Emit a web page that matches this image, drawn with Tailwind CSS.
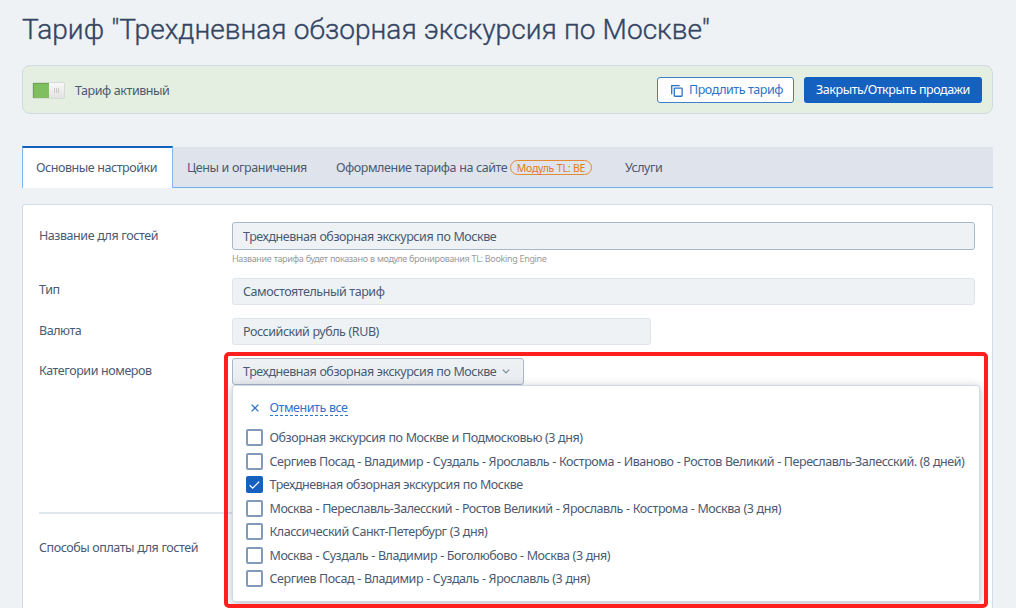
<!DOCTYPE html>
<html lang="ru">
<head>
<meta charset="utf-8">
<title>Тариф</title>
<script src="https://cdn.jsdelivr.net/npm/@tailwindcss/browser@4"></script>
</head>
<body class="h-[608px] w-[1016px] overflow-hidden bg-[#eef2f5] font-['Noto_Sans',sans-serif] text-[12.5px] leading-[18px] tracking-[-0.45px] whitespace-nowrap text-[#4b5a72] [word-spacing:0.3px]">
<div class="relative flex h-[608px] flex-col pr-[23px] pl-[22px]">
  <h1 class="mt-[10px] h-10 font-['Roboto',sans-serif] text-[28.1px] leading-10 font-light tracking-normal text-[#344563] [-webkit-text-stroke:0.35px_#344563]">Тариф "Трехдневная обзорная экскурсия по Москве"</h1>

  <section class="mt-[15px] flex h-[49px] shrink-0 items-center rounded-lg border border-[#d0dbe0] bg-[#e4eee1] pr-[10px] pl-[9px]">
    <div class="mt-px flex h-[17px] w-[33px] overflow-hidden rounded-[2px] border border-[#d4dcd3]">
      <div class="w-4 bg-[#7fbf60] shadow-[inset_1px_1px_1px_#69a54d]"></div>
      <div class="flex flex-1 items-center justify-center gap-px bg-linear-to-b from-[#f9f9f9] to-[#e2e2e2]">
        <i class="h-[5px] w-px bg-[#c8c8c8]"></i><i class="h-[5px] w-px bg-[#c8c8c8]"></i><i class="h-[5px] w-px bg-[#c8c8c8]"></i>
      </div>
    </div>
    <span class="mt-[2px] ml-[10px]">Тариф активный</span>
    <button class="ml-auto flex h-[26px] w-[137px] items-center rounded-[3px] border border-[#3f80cb] bg-white pl-[13px] text-[#2f73c5]">
      <svg class="mt-[3px] mr-[7px] size-[12px]" viewBox="0 0 11 11" fill="none" stroke="currentColor" stroke-width="1.2"><path d="M.65 8.5V.65H8"/><rect x="3" y="2.9" width="7.2" height="7.4" rx=".6"/></svg>
      <span class="-ml-px mt-px">Продлить тариф</span>
    </button>
    <button class="ml-[10px] h-[26px] w-[178px] rounded-[3px] bg-[#1561c0] pt-px text-white">Закрыть/Открыть продажи</button>
  </section>

  <nav class="mt-[32px] flex h-[42px] shrink-0 items-end">
    <div class="flex h-[42px] w-[151px] items-center justify-center border-x border-t-2 border-x-[#7ebaf0] border-t-[#1561b8] bg-white pr-[2px]"><span>Основные настройки</span></div>
    <div class="flex h-[41px] flex-1 items-center border-b border-[#6fb3ea] bg-[#dfe3ec] pl-[14px]">
      <span class="mt-[2px] w-[149px]">Цены и ограничения</span>
      <span class="mt-[2px] w-[174px]">Оформление тарифа на сайте</span>
      <span class="mt-px flex h-[15px] w-[82px] items-center justify-center rounded-full border border-[#e38a36] text-[10.5px] tracking-[-0.25px] text-[#e07c20]">Модуль TL: BE</span>
      <span class="mt-[2px] ml-[33px]">Услуги</span>
    </div>
  </nav>

  <main class="mt-[16px] h-[420px] shrink-0 rounded-t-[3px] border border-[#d5dbe6] bg-white pt-[17px] pr-[17px] pl-[16px]">
    <div class="flex h-[56px]"><label class="mt-[5px] w-[193px]">Название для гостей</label>
      <div class="flex-1">
        <div class="flex h-7 items-center rounded-[3px] border border-[#a9b6cb] bg-[#eef2f5] pt-[2px] pl-[10px]">Трехдневная обзорная экскурсия по Москве</div>
        <p class="mt-[3px] text-[9px] leading-3 tracking-[-0.36px] text-[#9a9a9a]">Название тарифа будет показано в модуле бронирования TL: Booking Engine</p>
      </div>
    </div>
    <div class="flex h-10"><label class="mt-[3px] w-[193px]">Тип</label><div class="flex h-[27px] flex-1 items-center rounded-[3px] border border-[#e0e5ec] bg-[#eef2f5] pt-px pl-[10px]">Самостоятельный тариф</div></div>
    <div class="flex h-10"><label class="mt-[4px] w-[193px]">Валюта</label><div class="flex h-[27px] w-[419px] items-center rounded-[3px] border border-[#e0e5ec] bg-[#eef2f5] pt-px pl-[10px]">Российский рубль (RUB)</div></div>
    <div class="flex h-[154px]"><label class="mt-[4px] w-[193px]">Категории номеров</label>
      <div class="flex h-[27px] w-[292px] items-center rounded-[3px] border border-[#a9b6cb] bg-linear-to-b from-[#eef2f5] to-[#e9edf1] pl-[10px]">Трехдневная обзорная экскурсия по Москве
        <svg class="ml-[6px] h-[5px] w-[8px]" viewBox="0 0 8 5" fill="none" stroke="#7d8a9f" stroke-width="1.2"><path d="M.8.7 4 4 7.2.7"/></svg>
      </div>
    </div>
    <div class="h-[2px] bg-[#e2e6ed]"></div>
    <p class="mt-[25px]">Способы оплаты для гостей</p>
  </main>

  <div class="absolute top-[385px] left-[232px] h-[217px] w-[748px] rounded-[3px] border border-[#d2d9e6] bg-white pt-[13px] pl-[13px] shadow-[0_2px_10px_rgba(30,40,60,0.3)]">
    <div class="mb-[10px] flex h-[17px] items-center text-[#2f73c5]">
      <svg class="mr-[11px] ml-[4.5px] size-2" viewBox="0 0 8 8" fill="none" stroke="currentColor" stroke-width="1.3"><path d="m.6.6 6.8 6.8M7.4.6.6 7.4"/></svg>
      <a class="h-[17px] border-b border-dashed border-[#2f73c5] leading-[17px]">Отменить все</a>
    </div>
    <div class="flex flex-col">
      <div class="flex h-[23.5px] items-center"><i class="mr-[6.5px] size-[17px] shrink-0 rounded-[2px] border-2 border-[#8399b8]"></i><span class="pt-px">Обзорная экскурсия по Москве и Подмосковью (3 дня)</span></div>
      <div class="flex h-[23.5px] items-center"><i class="mr-[6.5px] size-[17px] shrink-0 rounded-[2px] border-2 border-[#8399b8]"></i><span class="pt-px">Сергиев Посад - Владимир - Суздаль - Ярославль - Кострома - Иваново - Ростов Великий - Переславль-Залесский. (8 дней)</span></div>
      <div class="flex h-[23.5px] items-center"><i class="mr-[6.5px] flex size-[17px] shrink-0 items-center justify-center rounded-[2px] bg-[#1561c0]"><svg class="h-2 w-[11px]" viewBox="0 0 11 8" fill="none" stroke="#fff" stroke-width="1.3"><path d="m.7 4.2 3 2.9L10.2.6"/></svg></i><span class="pt-px">Трехдневная обзорная экскурсия по Москве</span></div>
      <div class="flex h-[23.5px] items-center"><i class="mr-[6.5px] size-[17px] shrink-0 rounded-[2px] border-2 border-[#8399b8]"></i><span class="pt-px">Москва - Переславль-Залесский - Ростов Великий - Ярославль - Кострома - Москва (3 дня)</span></div>
      <div class="flex h-[23.5px] items-center"><i class="mr-[6.5px] size-[17px] shrink-0 rounded-[2px] border-2 border-[#8399b8]"></i><span class="pt-px">Классический Санкт-Петербург (3 дня)</span></div>
      <div class="flex h-[23.5px] items-center"><i class="mr-[6.5px] size-[17px] shrink-0 rounded-[2px] border-2 border-[#8399b8]"></i><span class="pt-px">Москва - Суздаль - Владимир - Боголюбово - Москва (3 дня)</span></div>
      <div class="flex h-[23.5px] items-center"><i class="mr-[6.5px] size-[17px] shrink-0 rounded-[2px] border-2 border-[#8399b8]"></i><span class="pt-px">Сергиев Посад - Владимир - Суздаль - Ярославль (3 дня)</span></div>
    </div>
  </div>
  <div class="absolute top-[352px] left-[224px] h-[256px] w-[764px] rounded-[5px] border-4 border-[#ff1f1f]"></div>
</div>
</body>
</html>
